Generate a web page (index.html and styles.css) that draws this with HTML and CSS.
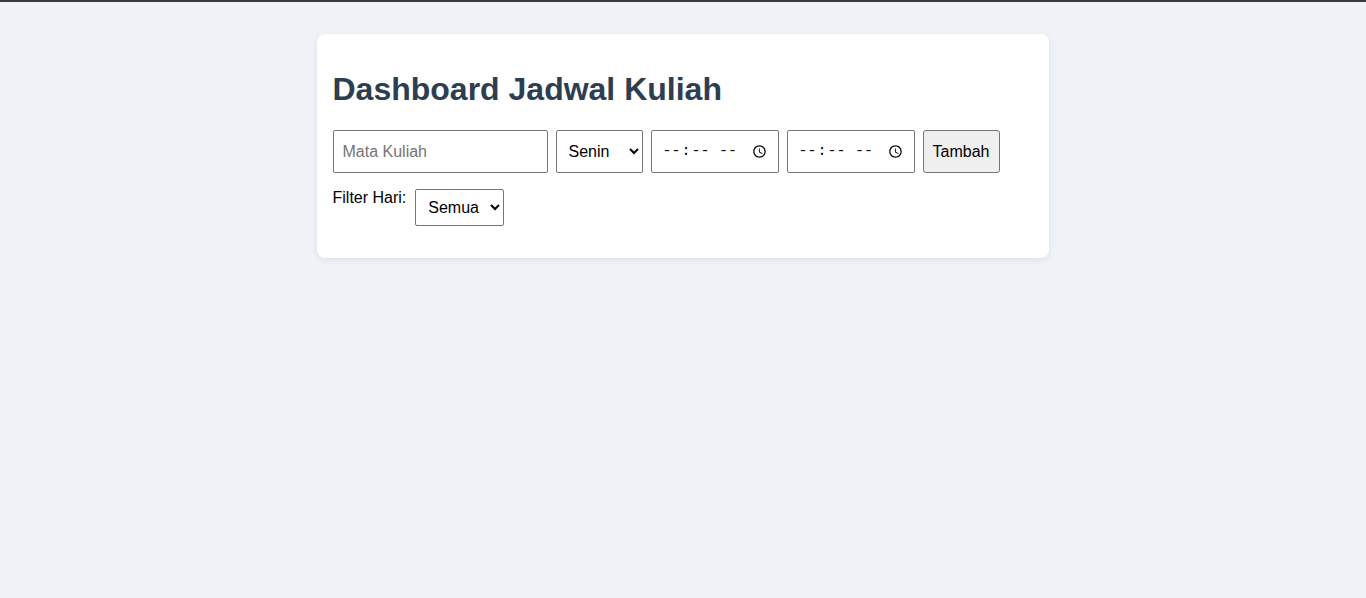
FILE: index.html
```html
<!DOCTYPE html>
<html lang="id">
<head>
<meta charset="utf-8">
<title>Dashboard Jadwal Kuliah</title>
<link rel="stylesheet" href="styles.css">
</head>
<body>
<div class="topbar"></div>
<main class="page">
  <section class="card">
    <h1 class="title">Dashboard Jadwal Kuliah</h1>
    <form class="form-row">
      <input class="field field-name" type="text" placeholder="Mata Kuliah">
      <select class="field field-day">
        <option>Senin</option>
        <option>Selasa</option>
        <option>Rabu</option>
        <option>Kamis</option>
        <option>Jumat</option>
      </select>
      <input class="field field-time" type="time">
      <input class="field field-time" type="time">
      <button class="field btn" type="button">Tambah</button>
    </form>
    <div class="filter-row">
      <label class="filter-label">Filter Hari:</label>
      <div>
        <select class="filter-select">
          <option>Semua</option>
          <option>Senin</option>
          <option>Selasa</option>
        </select>
      </div>
    </div>
  </section>
</main>
</body>
</html>
```

FILE: styles.css
```css
html, body {
  margin: 0;
  padding: 0;
}
body {
  background: #eff2f7;
  font-family: "Liberation Sans", Arial, sans-serif;
  font-size: 16px;
  color: #000;
  min-height: 598px;
}
.topbar {
  height: 2px;
  background: #3c3c3c;
}
.page {
  display: flex;
  justify-content: center;
  padding-top: 32px;
}
.card {
  width: 700px;
  background: #fff;
  border-radius: 8px;
  padding: 16px 16px 32px;
  box-shadow: 0 2px 6px rgba(0, 0, 0, 0.08);
  margin-left: -1px;
}
.title {
  margin: 21px 0 22px;
  font-size: 32px;
  line-height: 37px;
  font-weight: bold;
  color: #2c3e50;
}
.form-row {
  display: flex;
  gap: 8px;
  margin: 0 0 16px;
}
.field {
  box-sizing: border-box;
  height: 43px;
  padding: 10px;
  font-family: "Liberation Sans", Arial, sans-serif;
  font-size: 16px;
  border: 1px solid #767676;
  border-radius: 2px;
  background: #fff;
  color: #000;
  margin: 0;
}
.field-name {
  width: 215px;
  padding-left: 9px;
}
.field-name::placeholder {
  color: #757575;
}
.field-day {
  width: 87px;
  padding: 10px 8px;
}
.field-time {
  width: 128px;
  font-family: "Liberation Mono", "Courier New", monospace;
  font-size: 15px;
  padding-left: 10px;
  padding-right: 11px;
}
.field-time::-webkit-datetime-edit-ampm-field {
  margin-left: 3px;
}
.field-time::-webkit-calendar-picker-indicator {
  width: 15px;
  height: 15px;
  padding: 0;
  margin-left: 2px;
}
.btn {
  width: 77px;
  padding: 10px 8px;
  background: #efefef;
  border-radius: 3px;
}
.filter-row {
  display: flex;
  gap: 8px;
}
.filter-label {
  line-height: 18px;
}
.filter-select {
  box-sizing: border-box;
  width: 89px;
  height: 37px;
  padding: 8px 6px 8px 8px;
  font-family: "Liberation Sans", Arial, sans-serif;
  font-size: 16px;
  border: 1px solid #767676;
  border-radius: 2px;
  background: #fff;
  color: #000;
  margin: 0 0 0 1px;
}
```
